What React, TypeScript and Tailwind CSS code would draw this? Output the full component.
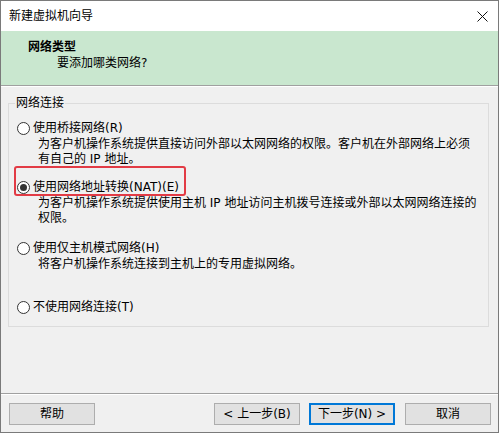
import React from "react";

const font = { fontFamily: '"DejaVu Sans", "Noto Sans CJK SC", sans-serif' };

function Radio({ checked }: { checked?: boolean }) {
  return (
    <span className="w-[13px] h-[13px] rounded-full border border-[#333333] bg-white flex items-center justify-center shrink-0">
      {checked && <span className="w-[7px] h-[7px] rounded-full bg-[#333333]" />}
    </span>
  );
}

function Option({
  label,
  checked,
  desc,
  mt,
  highlight,
}: {
  label: string;
  checked?: boolean;
  desc?: string[];
  mt: string;
  highlight?: boolean;
}) {
  return (
    <div className={mt}>
      <div className="relative flex items-center h-[15px] pl-[8px]">
        {highlight && (
          <span className="absolute left-[5px] top-[-14px] w-[172px] h-[30px] border-2 border-[#e23b45] rounded-[3px]" />
        )}
        <Radio checked={checked} />
        <span className="ml-[3px] leading-[15px]">{label}</span>
      </div>
      {desc && (
        <div className="pl-[29px] mt-[1px] leading-[15px]">
          {desc.map((d, i) => (
            <div key={i} className="whitespace-pre">{d}</div>
          ))}
        </div>
      )}
    </div>
  );
}

function Btn({ children, primary }: { children: React.ReactNode; primary?: boolean }) {
  return (
    <div
      className={`w-[86px] h-[22px] flex items-center justify-center bg-[#e1e1e1] border ${
        primary ? "border-[#0078d7] border-2" : "border-[#adadad]"
      } text-[12px] leading-[15px]`}
    >
      {children}
    </div>
  );
}

export default function App() {
  return (
    <div className="w-[499px] h-[433px] border border-[#7a7a7a] flex flex-col bg-[#f0f0f0] text-[12px] text-black" style={font}>
      <div className="h-[30px] bg-white flex items-center justify-between pl-[8px] pr-[10px]">
        <span className="leading-[15px]">新建虚拟机向导</span>
        <svg width="11" height="11" viewBox="0 0 11 11">
          <path d="M0.5 0.5 L10.5 10.5 M10.5 0.5 L0.5 10.5" stroke="#111" strokeWidth="1" />
        </svg>
      </div>
      <div className="h-[54px] bg-[#c9e7cf] flex flex-col pl-[27px] pt-[9px]">
        <div className="font-bold leading-[15px]">网络类型</div>
        <div className="pl-[29px] mt-[1px] leading-[15px]">要添加哪类网络?</div>
      </div>
      <div className="h-[1px] bg-[#a0a0a0]" />
      <div className="h-[1px] bg-white" />
      <div className="flex-1 pt-[9px] pl-[7px]">
        <fieldset className="w-[481px] h-[231px] border border-[#dcdcdc] pb-[10px]">
          <legend className="ml-[6px] px-[1px] leading-[15px]">网络连接</legend>
          <Option
            mt="mt-[10px]"
            label="使用桥接网络(R)"
            desc={["为客户机操作系统提供直接访问外部以太网网络的权限。客户机在外部网络上必须", "有自己的 IP 地址。"]}
          />
          <Option
            mt="mt-[13px]"
            checked
            highlight
            label="使用网络地址转换(NAT)(E)"
            desc={["为客户机操作系统提供使用主机 IP 地址访问主机拨号连接或外部以太网网络连接的", "权限。"]}
          />
          <Option
            mt="mt-[15px]"
            label="使用仅主机模式网络(H)"
            desc={["将客户机操作系统连接到主机上的专用虚拟网络。"]}
          />
          <Option mt="mt-[28px]" label="不使用网络连接(T)" />
        </fieldset>
      </div>
      <div className="h-[1px] bg-[#a0a0a0]" />
      <div className="h-[1px] bg-white" />
      <div className="h-[37px] flex pt-[8px] pl-[8px]">
        <Btn>帮助</Btn>
        <div className="ml-[119px]">
          <Btn>&lt; 上一步(B)</Btn>
        </div>
        <div className="ml-[9px]">
          <Btn primary>下一步(N) &gt;</Btn>
        </div>
        <div className="ml-[10px]">
          <Btn>取消</Btn>
        </div>
      </div>
    </div>
  );
}
